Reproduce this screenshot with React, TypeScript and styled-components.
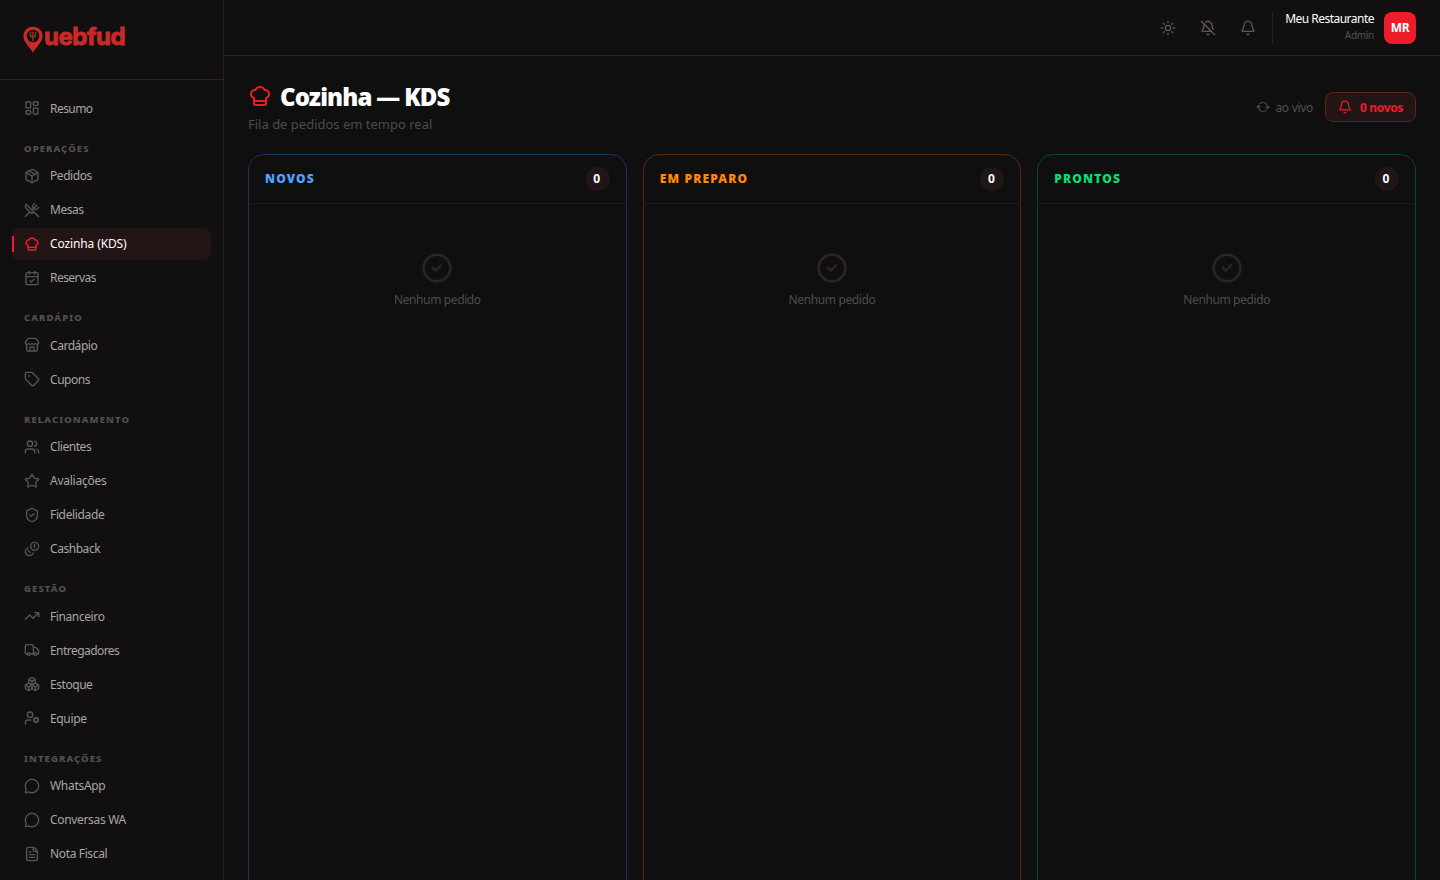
import React from "react";
import styled, { createGlobalStyle } from "styled-components";
import {
  LayoutDashboard, Package, UtensilsCrossed, ChefHat, CalendarCheck, Store, Tag, Users, Star,
  ShieldCheck, TrendingUp, Truck, Boxes, UserCog, MessageCircle, FileText, Sun, BellOff,
  Bell, RefreshCw, CircleCheck,
} from "lucide-react";

const GlobalStyle = createGlobalStyle`
  * { box-sizing: border-box; }
  body { margin: 0; background: #0f0f0f; overflow: hidden; }
  h1, p { margin: 0; }
  button { font: inherit; background: none; border: 0; padding: 0; }
`;

const Shell = styled.div`
  display: flex;
  height: 880px;
  overflow: hidden;
  color: #fff;
  background: #0f0f0f;
  font-family: "Noto Sans", sans-serif;
`;

const Sidebar = styled.aside`
  width: 224px;
  flex: none;
  background: #110f0f;
  border-right: 1px solid #271e1f;
  overflow: hidden;
`;

const Brand = styled.div`
  height: 80px;
  padding: 26px 0 0 23px;
  display: flex;
  align-items: flex-start;
  border-bottom: 1px solid #2a2122;
  color: #c92a29;
`;

const BrandName = styled.span`
  font: 700 24px/22px Inter, sans-serif;
  letter-spacing: -0.45px;
  margin-left: 1px;
  -webkit-text-stroke: 0.9px #c92a29;
`;

const Nav = styled.nav`
  padding: 12px 12px 0;
`;

const Group = styled.div`
  display: flex;
  flex-direction: column;
  gap: 2px;
`;

const GroupTitle = styled.div`
  height: 35.6px;
  padding: 16.5px 12px 0;
  margin-bottom: -2px;
  font-size: 9.5px;
  line-height: 15px;
  font-weight: 800;
  letter-spacing: 1.1px;
  color: #545152;
`;

const NavItem = styled.a<{ $active?: boolean; $track?: number }>`
  position: relative;
  height: 32px;
  padding: 0 12px;
  display: flex;
  align-items: center;
  gap: 10px;
  border-radius: 8px;
  font-size: 12px;
  letter-spacing: ${(p) => p.$track ?? -0.45}px;
  color: ${(p) => (p.$active ? "#fff" : "#a8a6a6")};
  background: ${(p) => (p.$active ? "#231516" : "transparent")};
  svg { color: ${(p) => (p.$active ? "#ee2128" : "#5a5555")}; }
  &::before {
    content: "";
    display: ${(p) => (p.$active ? "block" : "none")};
    position: absolute;
    left: 0;
    top: 8px;
    width: 2px;
    height: 16px;
    background: #ed1c2b;
  }
`;

const Main = styled.main`
  flex: 1;
  min-width: 0;
  display: flex;
  flex-direction: column;
`;

const TopBar = styled.header`
  height: 56px;
  flex: none;
  padding: 0 24px;
  display: flex;
  align-items: center;
  justify-content: flex-end;
  background: #110f0f;
  border-bottom: 1px solid #2a2122;
`;

const IconButton = styled.button`
  width: 32px;
  height: 32px;
  margin-right: 8px;
  display: grid;
  place-items: center;
  color: #5f5858;
`;

const Account = styled.div`
  height: 32px;
  display: flex;
  align-items: center;
  gap: 10px;
  padding-left: 12px;
  border-left: 1px solid #2a1d1e;
`;

const AccountText = styled.div`
  width: 89px;
  text-align: right;
  white-space: nowrap;
  padding-bottom: 2px;
`;

const AccountName = styled.div`
  font-size: 12px;
  line-height: 16px;
  letter-spacing: -0.52px;
`;

const AccountRole = styled.div`
  font-size: 10px;
  line-height: 16px;
  letter-spacing: -0.3px;
  color: #545152;
`;

const Avatar = styled.div`
  width: 32px;
  height: 32px;
  border-radius: 8px;
  display: grid;
  place-items: center;
  background: #ed1c2b;
  font-size: 12px;
  font-weight: 700;
  letter-spacing: -0.3px;
`;

const Content = styled.section`
  flex: 1;
  min-height: 0;
  padding: 24px 24px 0;
  display: flex;
  flex-direction: column;
`;

const Heading = styled.div`
  height: 74px;
  flex: none;
  display: flex;
  justify-content: space-between;
`;

const Title = styled.h1`
  height: 34px;
  display: flex;
  align-items: center;
  gap: 8px;
  font-size: 24px;
  line-height: 32px;
  font-weight: 900;
  letter-spacing: -0.88px;
  word-spacing: -0.6px;
  svg { color: #ed1c24; margin-bottom: 2px; }
`;

const Subtitle = styled.p`
  font-size: 13px;
  line-height: 20px;
  color: #4d4b4b;
`;

const Status = styled.div`
  height: 30px;
  margin-top: 12px;
  display: flex;
  align-items: center;
  gap: 12px;
`;

const Live = styled.span`
  display: flex;
  align-items: center;
  gap: 6px;
  font-size: 12px;
  letter-spacing: -0.3px;
  color: #545151;
  svg { transform: rotate(42deg); }
`;

const NewOrders = styled.button`
  height: 30px;
  width: 91px;
  display: flex;
  align-items: center;
  justify-content: center;
  gap: 8px;
  border: 1px solid #5e250f;
  border-radius: 8px;
  background: #231516;
  color: #ed1c2b;
  font-size: 12px;
  font-weight: 700;
  letter-spacing: -0.35px;
`;

const Board = styled.div`
  flex: 1;
  display: grid;
  grid-template-columns: repeat(3, 1fr);
  gap: 16px;
`;

const Column = styled.div<{ $line: string }>`
  height: 760px;
  border: 1px solid ${(p) => p.$line};
  border-radius: 16px;
`;

const ColumnHead = styled.div<{ $tone: string }>`
  height: 49px;
  padding: 0 16px;
  display: flex;
  align-items: center;
  justify-content: space-between;
  border-bottom: 1px solid #211718;
  color: ${(p) => p.$tone};
  font-size: 12px;
  font-weight: 900;
  letter-spacing: 1.15px;
`;

const ColumnTitle = styled.span`
  padding-bottom: 2px;
`;

const Count = styled.span`
  width: 24px;
  height: 24px;
  padding: 0 2px 1px 0;
  border-radius: 50%;
  display: grid;
  place-items: center;
  background: #201617;
  color: #fff;
  font-weight: 700;
  letter-spacing: 0;
`;

const Empty = styled.div`
  padding-top: 48px;
  display: flex;
  flex-direction: column;
  align-items: center;
  gap: 8px;
  font-size: 12px;
  line-height: 16px;
  letter-spacing: -0.38px;
  color: #4f4c4d;
  svg { color: #2d2324; }
`;

const CoinPair = ({ size = 16 }: { size?: number }) => (
  <svg
    width={size}
    height={size}
    viewBox="0 0 24 24"
    fill="none"
    stroke="currentColor"
    strokeWidth="2"
    strokeLinecap="round"
    strokeLinejoin="round"
  >
    <path d="M13.744 17.736a6 6 0 1 1-7.48-7.48" />
    <path d="M15 6h1v4" />
    <path d="m6.134 14.768.866-.5 2 3.464" />
    <circle cx="16" cy="8" r="6" />
  </svg>
);

type Item = {
  label: string;
  icon: React.ComponentType<{ size?: number }>;
  active?: boolean;
  track?: number;
};

const groups: { title?: string; items: Item[] }[] = [
  { items: [{ label: "Resumo", icon: LayoutDashboard, track: -0.55 }] },
  {
    title: "OPERAÇÕES",
    items: [
      { label: "Pedidos", icon: Package },
      { label: "Mesas", icon: UtensilsCrossed },
      { label: "Cozinha (KDS)", icon: ChefHat, active: true, track: -0.12 },
      { label: "Reservas", icon: CalendarCheck, track: -0.55 },
    ],
  },
  { title: "CARDÁPIO", items: [{ label: "Cardápio", icon: Store }, { label: "Cupons", icon: Tag }] },
  {
    title: "RELACIONAMENTO",
    items: [
      { label: "Clientes", icon: Users },
      { label: "Avaliações", icon: Star, track: -0.25 },
      { label: "Fidelidade", icon: ShieldCheck, track: -0.35 },
      { label: "Cashback", icon: CoinPair },
    ],
  },
  {
    title: "GESTÃO",
    items: [
      { label: "Financeiro", icon: TrendingUp, track: -0.4 },
      { label: "Entregadores", icon: Truck, track: -0.55 },
      { label: "Estoque", icon: Boxes },
      { label: "Equipe", icon: UserCog, track: -0.35 },
    ],
  },
  {
    title: "INTEGRAÇÕES",
    items: [
      { label: "WhatsApp", icon: MessageCircle, track: -0.3 },
      { label: "Conversas WA", icon: MessageCircle, track: -0.33 },
      { label: "Nota Fiscal", icon: FileText, track: -0.36 },
    ],
  },
];

const columns = [
  { title: "NOVOS", tone: "#51a2ff", line: "#1b315b" },
  { title: "EM PREPARO", tone: "#ff8904", line: "#5e250f" },
  { title: "PRONTOS", tone: "#05df72", line: "#0c4425" },
];

const PinLogo = () => (
  <svg width="20" height="27" viewBox="0 0 20 27" fill="none">
    <path
      fill="currentColor"
      fillRule="evenodd"
      d="M10 .8C4.600.8.4 4.800.4 10c0 6.400 6.300 10.700 9.600 16.800 3.300-6.100 9.600-10.400 9.600-16.800C19.600 4.800 15.400.8 10 .8Zm0 2.900a6.300 6.300 0 1 1 0 12.600 6.300 6.300 0 0 1 0-12.600Z"
    />
    <path
      d="M7.500 5.800v3.400q0 1.800 2.500 1.800t2.500-1.800V5.800M10 5.600v9.400"
      stroke="#8a3220"
      strokeWidth="1.600"
    />
  </svg>
);

export default function App() {
  return (
    <>
      <GlobalStyle />
      <Shell>
        <Sidebar>
          <Brand>
            <PinLogo />
            <BrandName>uebfud</BrandName>
          </Brand>
          <Nav>
            {groups.map((g, i) => (
              <Group key={i}>
                {g.title && <GroupTitle>{g.title}</GroupTitle>}
                {g.items.map(({ label, icon: Icon, active, track }) => (
                  <NavItem key={label} $active={active} $track={track}>
                    <Icon size={16} />
                    {label}
                  </NavItem>
                ))}
              </Group>
            ))}
          </Nav>
        </Sidebar>
        <Main>
          <TopBar>
            <IconButton><Sun size={16} /></IconButton>
            <IconButton><BellOff size={16} /></IconButton>
            <IconButton><Bell size={16} /></IconButton>
            <Account>
              <AccountText>
                <AccountName>Meu Restaurante</AccountName>
                <AccountRole>Admin</AccountRole>
              </AccountText>
              <Avatar>MR</Avatar>
            </Account>
          </TopBar>
          <Content>
            <Heading>
              <div>
                <Title><ChefHat size={24} />Cozinha — KDS</Title>
                <Subtitle>Fila de pedidos em tempo real</Subtitle>
              </div>
              <Status>
                <Live><RefreshCw size={12} />ao vivo</Live>
                <NewOrders><Bell size={14} />0 novos</NewOrders>
              </Status>
            </Heading>
            <Board>
              {columns.map((c) => (
                <Column key={c.title} $line={c.line}>
                  <ColumnHead $tone={c.tone}><ColumnTitle>{c.title}</ColumnTitle><Count>0</Count></ColumnHead>
                  <Empty><CircleCheck size={32} />Nenhum pedido</Empty>
                </Column>
              ))}
            </Board>
          </Content>
        </Main>
      </Shell>
    </>
  );
}
